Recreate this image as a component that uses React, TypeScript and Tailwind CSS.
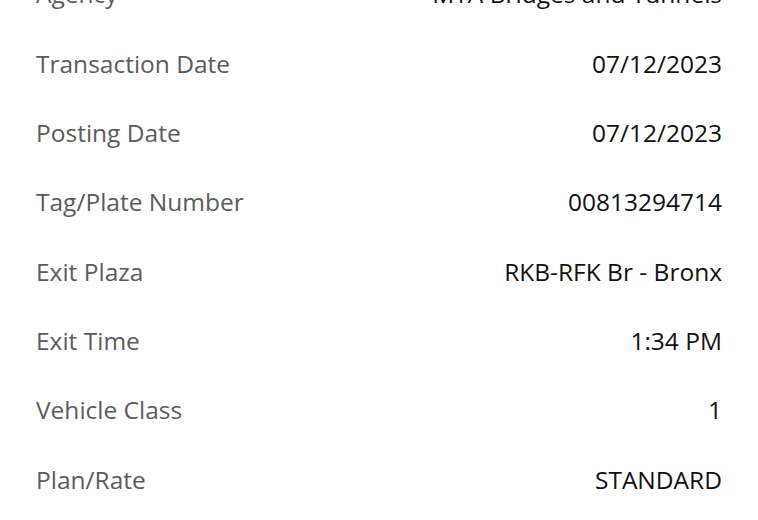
const rows = [
  { label: "Agency", value: "MTA Bridges and Tunnels" },
  { label: "Transaction Date", value: "07/12/2023" },
  { label: "Posting Date", value: "07/12/2023" },
  { label: "Tag/Plate Number", value: "00813294714" },
  { label: "Exit Plaza", value: "RKB-RFK Br - Bronx" },
  { label: "Exit Time", value: "1:34 PM" },
  { label: "Vehicle Class", value: "1" },
  { label: "Plan/Rate", value: "STANDARD" },
]

export default function App() {
  return (
    <div className="h-[520px] w-[758px] overflow-hidden bg-white font-['Open_Sans',sans-serif]">
      {/* transaction details list, scrolled */}
      <div className="-mt-[40px] px-[36px]">
        {rows.map((row) => (
          <div key={row.label} className="flex h-[69.33px] items-center justify-between text-[24.5px]">
            <span className="text-[#5c5c5c]">{row.label}</span>
            <span className="text-[#111111]">{row.value}</span>
          </div>
        ))}
      </div>
    </div>
  )
}
